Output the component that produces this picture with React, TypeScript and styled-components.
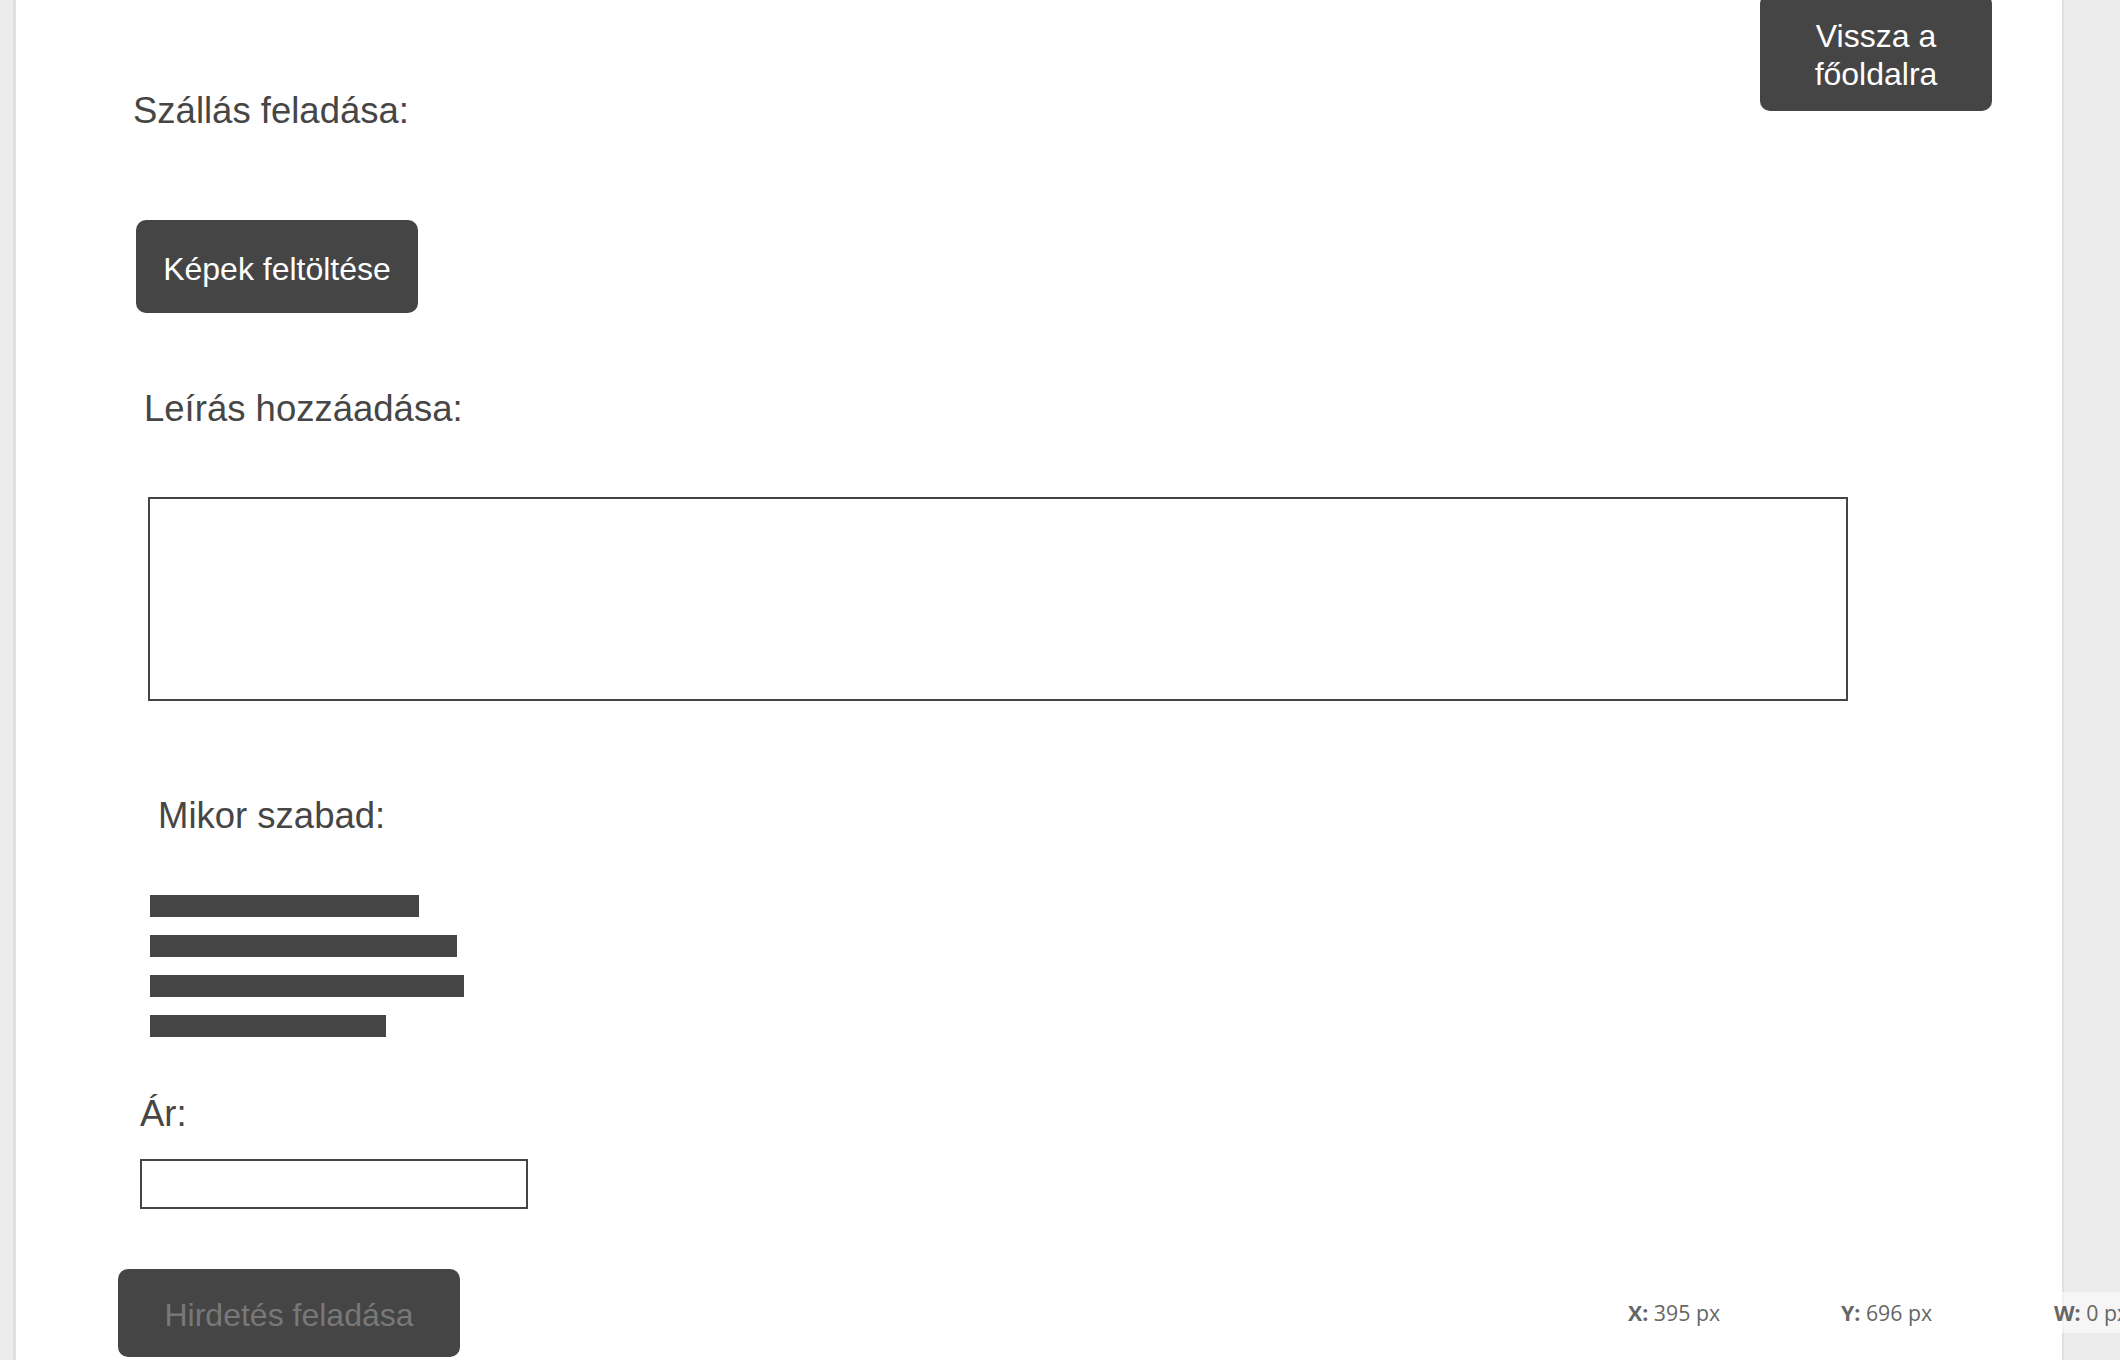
import React from "react";
import styled, { createGlobalStyle } from "styled-components";

const GlobalStyle = createGlobalStyle`
  html, body {
    margin: 0;
    padding: 0;
    width: 2120px;
    height: 1360px;
    overflow: hidden;
    background: #ececec;
    font-family: "Liberation Sans", Arial, sans-serif;
  }
  * { box-sizing: border-box; }
`;

const Page = styled.div`
  position: relative;
  display: flex;
  width: 2120px;
  height: 1360px;
  padding-left: 13px;
  background: #ececec;
  overflow: hidden;
`;

const Canvas = styled.main`
  width: 2051px;
  height: 1360px;
  background: #ffffff;
  border-left: 3px solid #dfdfdf;
  border-right: 2px solid #dfdfdf;
  display: flex;
  flex-direction: column;
  align-items: flex-start;
  overflow: hidden;
`;

const Header = styled.header`
  display: flex;
  align-self: stretch;
  justify-content: space-between;
  align-items: flex-start;
  padding-right: 70px;
`;

const Label = styled.div<{ $left: number; $top: number }>`
  margin-left: ${(p) => p.$left}px;
  margin-top: ${(p) => p.$top}px;
  font-size: 36.5px;
  line-height: 42px;
  color: #464646;
  white-space: nowrap;
`;

const DarkButton = styled.button<{
  $left: number;
  $top: number;
  $width: number;
  $height: number;
  $muted?: boolean;
}>`
  margin-left: ${(p) => p.$left}px;
  margin-top: ${(p) => p.$top}px;
  width: ${(p) => p.$width}px;
  height: ${(p) => p.$height}px;
  display: flex;
  align-items: center;
  justify-content: center;
  padding: 4px 20px 0;
  background: #454545;
  border: none;
  border-radius: 10px;
  color: ${(p) => (p.$muted ? "#787878" : "#ffffff")};
  font-family: "Liberation Sans", Arial, sans-serif;
  font-size: 32px;
  line-height: 38px;
  text-align: center;
  cursor: pointer;
  flex-shrink: 0;
`;

const TextArea = styled.textarea`
  margin-left: 132px;
  margin-top: 67px;
  width: 1700px;
  height: 204px;
  border: 2px solid #444444;
  border-radius: 0;
  background: #ffffff;
  resize: none;
  outline: none;
  padding: 8px;
  font-family: "Liberation Sans", Arial, sans-serif;
  font-size: 24px;
`;

const BarList = styled.div`
  margin-left: 134px;
  margin-top: 58px;
  display: flex;
  flex-direction: column;
  gap: 18px;
`;

const Bar = styled.div<{ $width: number }>`
  width: ${(p) => p.$width}px;
  height: 22px;
  background: #454545;
`;

const PriceInput = styled.input`
  margin-left: 124px;
  margin-top: 24px;
  width: 388px;
  height: 50px;
  border: 2px solid #444444;
  border-radius: 0;
  background: #ffffff;
  outline: none;
  padding: 0 8px;
  font-family: "Liberation Sans", Arial, sans-serif;
  font-size: 24px;
`;

const StatusBar = styled.div`
  position: absolute;
  left: 1600px;
  top: 1292px;
  width: 520px;
  height: 41px;
  display: flex;
  padding-left: 28px;
  background: rgba(255, 255, 255, 0.55);
  font-family: "Open Sans", "Noto Sans", sans-serif;
  font-size: 21.3px;
  line-height: 41px;
  color: #666666;
  overflow: hidden;
`;

const StatusItem = styled.div`
  width: 213px;
  flex-shrink: 0;
  white-space: nowrap;
  b {
    font-weight: 700;
  }
`;

const bars = [269, 307, 314, 236];

export default function App() {
  return (
    <>
      <GlobalStyle />
      <Page>
        <Canvas>
          <Header>
            <Label $left={117} $top={90}>
              Szállás feladása:
            </Label>
            <DarkButton $left={0} $top={-6} $width={232} $height={117}>
              Vissza a főoldalra
            </DarkButton>
          </Header>
          <DarkButton $left={120} $top={88} $width={282} $height={93}>
            Képek feltöltése
          </DarkButton>
          <Label $left={128} $top={75}>
            Leírás hozzáadása:
          </Label>
          <TextArea />
          <Label $left={142} $top={94}>
            Mikor szabad:
          </Label>
          <BarList>
            {bars.map((w, i) => (
              <Bar key={i} $width={w} />
            ))}
          </BarList>
          <Label $left={124} $top={56}>
            Ár:
          </Label>
          <PriceInput />
          <DarkButton $left={102} $top={60} $width={342} $height={88} $muted>
            Hirdetés feladása
          </DarkButton>
        </Canvas>
        <StatusBar>
          <StatusItem>
            <b>X:</b> 395 px
          </StatusItem>
          <StatusItem>
            <b>Y:</b> 696 px
          </StatusItem>
          <StatusItem>
            <b>W:</b> 0 px
          </StatusItem>
        </StatusBar>
      </Page>
    </>
  );
}
